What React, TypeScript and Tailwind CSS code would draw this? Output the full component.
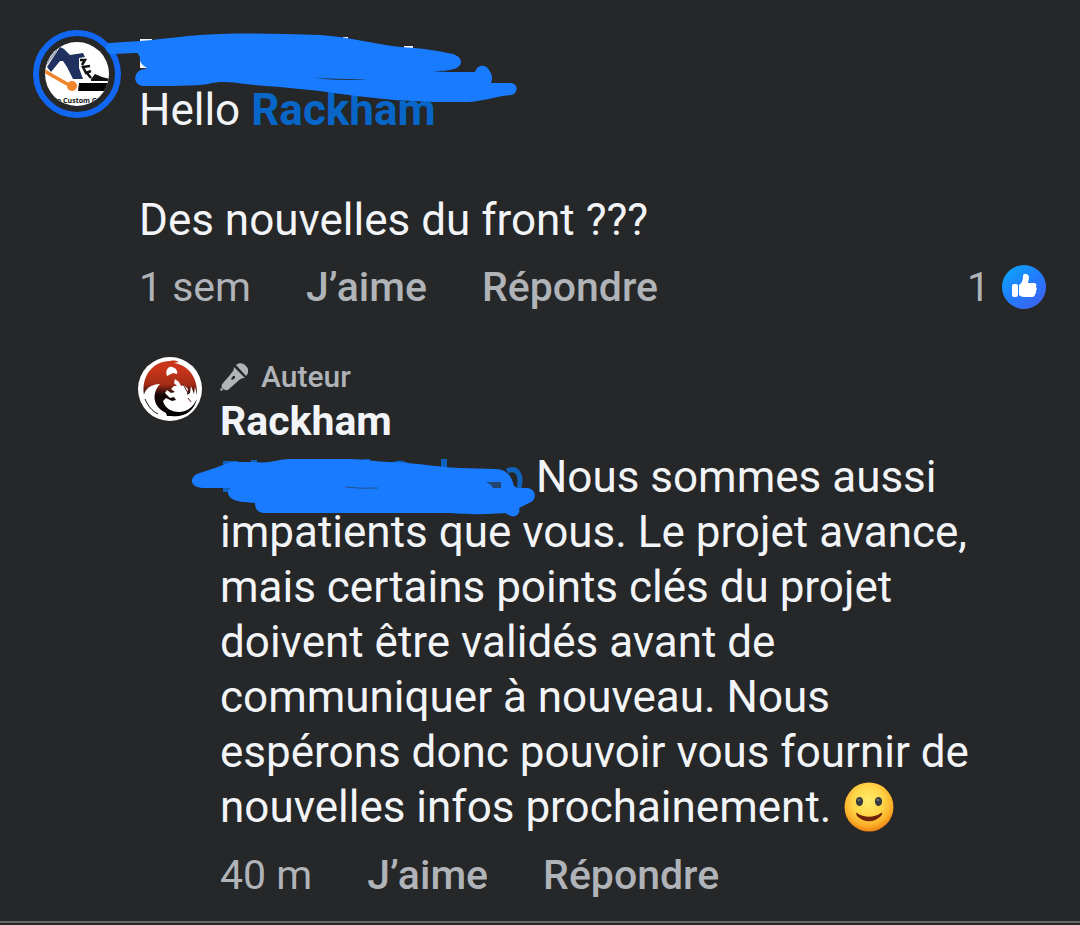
import type { ReactNode } from "react";

interface CommentActionsProps {
  time: string;
  children?: ReactNode;
}

function CommentActions({ time, children }: CommentActionsProps) {
  return (
    <div className="flex items-center gap-[55px] text-[41px] leading-[56px] text-[#b0b3b8]">
      <span>{time}</span>
      <button type="button" className="font-medium">
        J’aime
      </button>
      <button type="button" className="font-medium">
        Répondre
      </button>
      {children}
    </div>
  );
}

function CommenterAvatar() {
  return (
    <svg viewBox="0 0 88 88" className="size-[88px] shrink-0" role="img" aria-label="Commenter">
      <defs>
        <clipPath id="commenter-clip">
          <circle cx="44" cy="44" r="32" />
        </clipPath>
      </defs>
      <circle cx="44" cy="44" r="41" fill="none" stroke="#1267f2" strokeWidth="6" />
      <g clipPath="url(#commenter-clip)">
        <rect width="88" height="88" fill="#fff" />
        <path d="M14 37 L27 17 L31 19 L37 25 L50 23 L52 27 L46 28 L46 38 L50 49 L40 49 L34 37 L30 31 L27 31 L18 42 Z" fill="#20315f" />
        <path d="M12 36 L24 20" stroke="#9da7b5" strokeWidth="2" />
        <path d="M47 30 L52 30 L49 35 M57 36 L50 37 L53 43 L58 41 M54 43 L58 48" fill="none" stroke="#111" strokeWidth="2.5" />
        <path d="M58 49 L62 44 L69 47 L77 49 V51 H58 Z" fill="#111" />
        <path d="M10 40 L20 46 L36 55" fill="none" stroke="#ef852b" strokeWidth="3.5" />
        <circle cx="39" cy="56" r="5" fill="#ef852b" />
        <path d="M46 53 H78 V61 H45 Z" fill="#050505" />
        <text x="46" y="73" textAnchor="middle" fontSize="7" fontWeight="700" fontFamily="Open Sans, sans-serif" fill="#111">
          o Custom Ga
        </text>
      </g>
    </svg>
  );
}

function RackhamAvatar() {
  return (
    <svg viewBox="0 0 64 64" className="size-16 shrink-0" role="img" aria-label="Rackham">
      <defs>
        <linearGradient id="dragon" gradientUnits="userSpaceOnUse" x1="32" y1="4" x2="32" y2="60">
          <stop offset="0.15" stopColor="#c8351a" />
          <stop offset="0.42" stopColor="#a42b16" />
          <stop offset="0.6" stopColor="#170706" />
          <stop offset="1" stopColor="#000" />
        </linearGradient>
      </defs>
      <circle cx="32" cy="32" r="32" fill="#fff" />
      <path
        d="M6 38 C3 19 15 4 32 4 C36 3 39 4 41 5 L36 6 C50 8 60 20 59 38 L57 30 L56 37 L53 29 L52 36 L49 38 L50 32 L46 28 L43 29 L41 25 L37 22 L36 26 L39 29 L36 29 L33 32 L37 35 L33 36 L29 33 L27 36 L32 41 L36 40 L38 43 L34 44 L28 41 L25 44 C27 51 33 55 41 55 C49 55 55 50 59 42 C56 54 46 61 33 59 L29 59 L28 56 C19 52 15 44 17 36 C18 32 20 29 22 27 C13 27 7 32 6 38 Z"
        fill="url(#dragon)"
      />
      <path d="M7 42 C10 49 14 54 20 57" fill="none" stroke="#180a08" strokeWidth="1" />
      <path d="M29 19 C27 14 30 9 34 10 C38 11 40 14 39 17 L35 16 L31 18 Z" fill="#fff" />
      <path d="M45 27 L50 36 M50 41 L53 45" fill="none" stroke="#521b12" strokeWidth="1" />
    </svg>
  );
}

function MicIcon() {
  return (
    <svg viewBox="0 0 28 28" className="size-7" fill="#b0b3b8" aria-hidden="true">
      <path d="M16 2 C19-1 24 0 26 3 C29 6 29 10 26 13 Z" />
      <path fillRule="evenodd" d="M14 4 L25 15 C21 15 19 17 17 19 L9 26 C7 28 5 27 3 26 C1 24 1 22 3 20 L10 12 C12 9 14 8 14 4 Z M13 13 L11 16 L12 17 L15 15 L15 13 Z" />
      <circle cx="1.5" cy="26.5" r="1.3" />
    </svg>
  );
}

function LikeBadge() {
  return (
    <svg viewBox="0 0 44 44" className="size-11" aria-hidden="true">
      <defs>
        <linearGradient id="like" x1="0" y1="0" x2="0.8" y2="1">
          <stop offset="0" stopColor="#08abff" />
          <stop offset="0.6" stopColor="#2478fb" />
          <stop offset="1" stopColor="#3f63f0" />
        </linearGradient>
      </defs>
      <circle cx="22" cy="22" r="22" fill="url(#like)" />
      <rect x="10" y="19" width="6" height="13" rx="2" fill="#fff" />
      <path d="M17 20 C20 18 21 15 21 11 C21 8 26 8 27 12 C27 15 26 17 26 18 H32 C34 18 35 20 34 22 C35 23 35 25 34 26 C34 28 34 29 33 29 C33 31 32 32 30 32 H22 C20 32 18 31 17 30 Z" fill="#fff" />
    </svg>
  );
}

function SmileEmoji() {
  return (
    <svg viewBox="0 0 50 50" className="mx-0.5 inline-block size-[50px] align-[-10px]" role="img" aria-label="🙂">
      <defs>
        <radialGradient id="face" cx="0.48" cy="0.38" r="0.62">
          <stop offset="0" stopColor="#ffec6b" />
          <stop offset="0.5" stopColor="#ffd548" />
          <stop offset="0.8" stopColor="#fbb02a" />
          <stop offset="1" stopColor="#ee8113" />
        </radialGradient>
      </defs>
      <circle cx="25" cy="25" r="24.5" fill="url(#face)" />
      <ellipse cx="15.5" cy="19.5" rx="3.6" ry="4.6" fill="#363b3d" />
      <ellipse cx="34.5" cy="19.5" rx="3.6" ry="4.6" fill="#363b3d" />
      <circle cx="15" cy="18" r="1.3" fill="#687074" />
      <circle cx="34" cy="18" r="1.3" fill="#687074" />
      <path d="M13 31 C20 36 30 36 37 31 C39 30 38 33 37 34 C30 41 20 41 13 34 C12 32 12 30 13 31 Z" fill="#702209" />
    </svg>
  );
}

function NameScribble() {
  return (
    <svg viewBox="100 30 420 76" className="absolute top-0 -left-[39px] h-[76px] w-[420px]" aria-hidden="true">
      <path d="M140 39 H152 V45 H140 Z M140 57 H147 V68 H140 Z M343 37 h5 v4 h-5 Z M404 46 h9 v4 h-9 Z" fill="#f2f4f7" />
      <path
        d="M109 43 L140 41 C175 38 190 35 220 34 C255 33 285 34 320 35 C350 37 375 44 400 47 C420 48 440 51 453 54 C464 58 463 66 454 69 C447 71 440 71 433 71 C440 72 450 72 475 72 C478 63 487 65 489 70 C492 74 493 78 491 83 H511 C519 84 518 94 511 95 C498 96 480 102 468 102 H435 C410 101 390 100 375 98 C350 96 325 91 310 90 C285 87 260 86 245 84 C230 82 220 81 208 84 C195 86 170 86 143 86 C134 85 133 75 139 71 C142 69 145 69 148 68 C142 66 139 61 140 57 C138 55 139 53 136 53 L112 54 C105 53 104 45 109 43 Z"
        fill="#197bff"
      />
      <path d="M312 77 C325 79 350 79 367 79 C345 81 326 80 312 77 Z" fill="#25364b" />
    </svg>
  );
}

function MentionScribble() {
  return (
    <svg viewBox="190 455 350 66" className="absolute top-[3px] -left-[30px] h-[66px] w-[350px]" aria-hidden="true">
      <path d="M223 461 H238 V466 H223 Z M223 485 H229 V492 H223 Z M251 460 h6 v4 h-6 Z M363 459 h7 v5 h-7 Z M391 463 q9 -5 17 0 v5 h-17 Z M441 459 H447 V468 H441 Z" fill="#0f62bd" />
      <path d="M507 471 C518 466 522 476 519 488" fill="none" stroke="#0f62bd" strokeWidth="5" />
      <path
        d="M197 474 C210 470 222 465 232 462 H255 C270 464 278 459 290 459 H350 C365 459 375 462 390 462 C420 463 435 467 460 468 L495 469 C508 469 512 478 514 486 L517 488 H528 C537 490 537 500 529 503 L519 508 C521 513 516 518 511 516 L505 513 C495 514 470 515 450 513 H265 C257 513 255 508 255 503 C245 502 235 502 231 498 C227 495 227 491 230 488 H202 C189 487 190 477 197 474 Z"
        fill="#197bff"
      />
      <path d="M486 482 H501 V488 H493 L491 485 Z" fill="#24456f" />
      <path d="M345 487 Q362 489 378 488" fill="none" stroke="#24518b" strokeWidth="1" />
    </svg>
  );
}

export default function App() {
  return (
    <main className="min-h-screen bg-[#252728] font-['Roboto',sans-serif] text-[#f2f4f7]">
      <section className="border-b-2 border-[#666768] pt-[30px] pb-[18px]">
        <article className="flex items-start gap-[18px] pr-[34px] pl-[33px]">
          <CommenterAvatar />
          <div className="min-w-0 flex-1">
            <div className="relative z-10 h-[53px]">
              <NameScribble />
            </div>
            <div className="text-[44px] leading-[55px]">
              <p>
                Hello{" "}
                <a href="#rackham" className="font-bold text-[#0866c8]">
                  Rackham
                </a>
              </p>
              <p className="mt-[55px]">Des nouvelles du front ???</p>
            </div>
            <div className="mt-[11px]">
              <CommentActions time="1 sem">
                <button type="button" aria-label="1 J’aime" className="ml-auto flex items-center gap-3">
                  1
                  <LikeBadge />
                </button>
              </CommentActions>
            </div>
          </div>
        </article>

        <article className="mt-[42px] flex items-start gap-[18px] pr-20 pl-[138px]">
          <RackhamAvatar />
          <div className="min-w-0 flex-1">
            <div className="flex h-10 items-center gap-[13px] text-[30px] leading-10 text-[#b0b3b8]">
              <MicIcon />
              <span className="font-medium">Auteur</span>
            </div>
            <a href="#rackham" className="block text-[41px] leading-[48px] font-bold" id="rackham">
              Rackham
            </a>
            <p className="mt-[5px] text-[44px] leading-[55px]">
              <span className="relative inline-block h-10 w-[305px] align-baseline">
                <MentionScribble />
              </span>{" "}
              Nous sommes aussi impatients que vous. Le projet avance, mais certains points clés du projet doivent
              être validés avant de communiquer à nouveau. Nous espérons donc pouvoir vous fournir de nouvelles infos
              prochainement. <SmileEmoji />
            </p>
            <div className="mt-3">
              <CommentActions time="40 m" />
            </div>
          </div>
        </article>
      </section>
    </main>
  );
}
